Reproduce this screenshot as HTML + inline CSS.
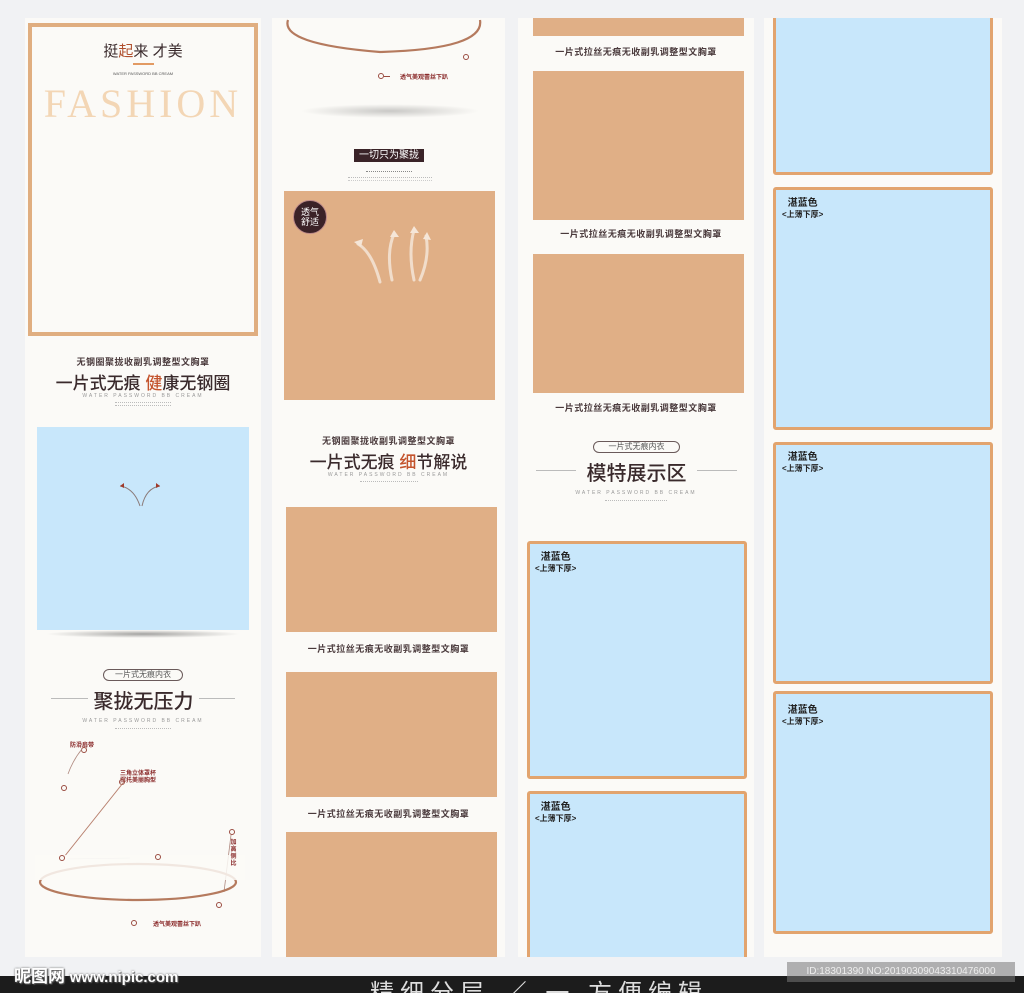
<!DOCTYPE html>
<html><head><meta charset="utf-8"><style>
*{margin:0;padding:0;box-sizing:border-box}
body{width:1024px;height:993px;overflow:hidden;background:#f1f2f4;position:relative;font-family:"Liberation Sans","Noto Sans CJK SC",sans-serif}
.a{position:absolute}
.col{position:absolute;top:18px;height:939px;background:#fbfaf7}
.clip{position:absolute;top:18px;height:939px;overflow:hidden}
.tan{position:absolute;background:#e0af86}
.blue{position:absolute;background:#c8e7fb;border:3px solid #e2a46e;border-radius:3px}
.t{position:absolute;white-space:nowrap;text-align:center;color:#3a2a2c}
.cap{font-size:9px;font-weight:bold;color:#4a3a3c;letter-spacing:.5px}
.wc{font-size:5px;color:#999;letter-spacing:2px}
.lbl{position:absolute;font-size:10px;font-weight:bold;color:#222;line-height:11px;text-align:center}
.lbl small{display:block;font-size:8px}
.dot{position:absolute;width:6px;height:6px;border:1.5px solid #9a4b40;border-radius:50%}
</style></head><body>

<!-- column 1 -->
<div class="col" style="left:25px;width:236px"></div>
<div class="a" style="left:28px;top:23px;width:230px;height:313px;border:4px solid #e0ae80"></div>
<div class="t" style="left:28px;width:230px;top:40px;font-size:15px;color:#3a2a2c">挺<span style="color:#b0502e">起</span>来 才美</div>
<div class="a" style="left:133px;top:63px;width:21px;height:2px;background:#e29a63"></div>
<div class="t" style="left:28px;width:230px;top:71px;font-size:4px;color:#555">WATER PASSWORD BB CREAM</div>
<div class="t" style="left:30px;width:226px;top:84px;font-family:'Liberation Serif',serif;font-size:40px;color:#f3d6b5;letter-spacing:4px;line-height:40px">FASHION</div>
<div class="t cap" style="left:25px;width:236px;top:355px">无钢圈聚拢收副乳调整型文胸罩</div>
<div class="t" style="left:25px;width:236px;top:369px;font-size:17px;font-weight:500">一片式无痕 <span style="color:#c4542d">健</span>康无钢圈</div>
<div class="t wc" style="left:25px;width:236px;top:393px">WATER PASSWORD BB CREAM</div>
<div class="a" style="left:115px;top:402px;width:56px;height:4px;border-top:1px dotted #bbb;border-bottom:1px dotted #bbb"></div>
<div class="a" style="left:37px;top:427px;width:212px;height:203px;background:#c8e7fb"></div>
<svg class="a" style="left:110px;top:478px" width="60" height="30"><path d="M30 28 Q24 10 10 8 M32 28 Q36 10 50 8" stroke="#8a7a78" fill="none" stroke-width="1"/><path d="M10 8l4-3v5z M50 8l-4-3v5z" fill="#a03a2a"/></svg>
<div class="a" style="left:45px;top:630px;width:196px;height:8px;background:radial-gradient(ellipse at center,rgba(0,0,0,.35),rgba(0,0,0,0) 70%)"></div>
<div class="a" style="left:103px;top:669px;width:80px;height:12px;border:1.3px solid #6a5a5a;border-radius:7px;font-size:8px;text-align:center;line-height:10px;color:#555">一片式无痕内衣</div>
<div class="a" style="left:51px;top:698px;width:37px;height:1px;background:#bbb"></div>
<div class="a" style="left:199px;top:698px;width:36px;height:1px;background:#bbb"></div>
<div class="t" style="left:88px;width:111px;top:685px;font-size:20px;font-weight:500">聚拢无压力</div>
<div class="t wc" style="left:25px;width:236px;top:718px">WATER PASSWORD BB CREAM</div>
<div class="a" style="left:115px;top:728px;width:56px;height:4px;border-top:1px dotted #bbb"></div>
<div class="t" style="left:70px;top:740px;font-size:6px;color:#8a2a2a;font-weight:bold">防滑肩带</div>
<div class="dot" style="left:81px;top:747px"></div>
<div class="dot" style="left:61px;top:785px"></div>
<div class="t" style="left:120px;top:771px;font-size:6px;color:#8a2a2a;font-weight:bold;text-align:left;line-height:7px">三角立体罩杯<br>撑托美丽胸型</div>
<div class="dot" style="left:119px;top:779px"></div>
<svg class="a" style="left:25px;top:740px" width="236" height="180"><path d="M57 9 Q48 20 43 34" stroke="#b08a80" fill="none" stroke-width=".8"/><path d="M98 43 L39 117" stroke="#b8806e" stroke-width="1"/><path d="M42 119 L105 118" stroke="#ccc" stroke-width=".6"/><path d="M206 95 L199 152" stroke="#b08a80" stroke-width=".8"/><ellipse cx="113" cy="142" rx="98" ry="18" fill="none" stroke="#b57a5e" stroke-width="2.2"/><rect x="10" y="115" width="210" height="25" fill="#fbfaf7" opacity=".85"/></svg>
<div class="dot" style="left:59px;top:855px"></div>
<div class="dot" style="left:155px;top:854px"></div>
<div class="dot" style="left:229px;top:829px"></div>
<div class="dot" style="left:216px;top:902px"></div>
<div class="t" style="left:230px;top:840px;font-size:6px;color:#8a2a2a;font-weight:bold;width:7px;white-space:normal;line-height:7px">加高侧比</div>
<div class="dot" style="left:131px;top:920px"></div>
<div class="t" style="left:153px;top:919px;font-size:6px;color:#8a2a2a;font-weight:bold">透气美观蕾丝下趴</div>

<!-- column 2 -->
<div class="col" style="left:272px;width:233px"></div>
<svg class="a" style="left:280px;top:14px" width="210" height="45"><path d="M8 6 Q0 30 100 38 Q205 35 200 6" stroke="#b57a5e" fill="none" stroke-width="2.2"/></svg>
<div class="dot" style="left:463px;top:54px"></div>
<div class="dot" style="left:378px;top:73px"></div>
<div class="a" style="left:384px;top:76px;width:6px;height:1px;background:#9a4b40"></div>
<div class="t" style="left:400px;top:72px;font-size:6px;color:#8a2a2a;font-weight:bold">透气美观蕾丝下趴</div>
<div class="a" style="left:300px;top:104px;width:180px;height:14px;background:radial-gradient(ellipse at center,rgba(0,0,0,.2),rgba(0,0,0,0) 70%)"></div>
<div class="a" style="left:354px;top:149px;width:70px;height:13px;background:#3a2328;color:#fff;font-size:10px;text-align:center;line-height:13px">一切只为聚拢</div>
<div class="a" style="left:366px;top:171px;width:46px;height:1px;border-top:1px dotted #888"></div>
<div class="a" style="left:348px;top:177px;width:84px;height:4px;border-top:1px dotted #bbb;border-bottom:1px dotted #ccc"></div>
<div class="tan" style="left:284px;top:191px;width:211px;height:209px"></div>
<div class="a" style="left:293px;top:200px;width:34px;height:34px;border-radius:50%;background:#3b2227;color:#fff;font-size:9px;line-height:10px;text-align:center;padding-top:6px;border:1px solid #b88">透气<br>舒适</div>
<svg class="a" style="left:350px;top:222px" width="90" height="65"><g stroke="#f5e6d8" fill="none" stroke-width="3" stroke-linecap="round" opacity=".85"><path d="M30 60 Q22 30 8 22"/><path d="M42 58 Q36 30 44 12"/><path d="M64 58 Q58 30 64 8"/><path d="M70 58 Q80 35 76 14"/></g><g fill="#f5e6d8"><path d="M4 20l9-3-2 8z"/><path d="M44 8l5 7h-9z"/><path d="M64 4l5 7h-9z"/><path d="M77 10l4 8-8-1z"/></g></svg>
<div class="t cap" style="left:272px;width:233px;top:434px">无钢圈聚拢收副乳调整型文胸罩</div>
<div class="t" style="left:272px;width:233px;top:448px;font-size:17px;font-weight:500">一片式无痕 <span style="color:#c4542d">细</span>节解说</div>
<div class="t wc" style="left:272px;width:233px;top:472px">WATER PASSWORD BB CREAM</div>
<div class="a" style="left:360px;top:481px;width:58px;height:4px;border-top:1px dotted #bbb"></div>
<div class="tan" style="left:286px;top:507px;width:211px;height:125px"></div>
<div class="t cap" style="left:272px;width:233px;top:642px">一片式拉丝无痕无收副乳调整型文胸罩</div>
<div class="tan" style="left:286px;top:672px;width:211px;height:125px"></div>
<div class="t cap" style="left:272px;width:233px;top:807px">一片式拉丝无痕无收副乳调整型文胸罩</div>
<div class="tan" style="left:286px;top:832px;width:211px;height:125px"></div>

<!-- column 3 -->
<div class="col" style="left:518px;width:236px"></div>
<div class="tan" style="left:533px;top:18px;width:211px;height:18px"></div>
<div class="t cap" style="left:518px;width:236px;top:45px">一片式拉丝无痕无收副乳调整型文胸罩</div>
<div class="tan" style="left:533px;top:71px;width:211px;height:149px"></div>
<div class="t cap" style="left:523px;width:236px;top:227px">一片式拉丝无痕无收副乳调整型文胸罩</div>
<div class="tan" style="left:533px;top:254px;width:211px;height:139px"></div>
<div class="t cap" style="left:518px;width:236px;top:401px">一片式拉丝无痕无收副乳调整型文胸罩</div>
<div class="a" style="left:593px;top:441px;width:87px;height:12px;border:1.3px solid #6a5a5a;border-radius:7px;font-size:8px;text-align:center;line-height:10px;color:#555">一片式无痕内衣</div>
<div class="a" style="left:536px;top:470px;width:40px;height:1px;background:#bbb"></div>
<div class="a" style="left:697px;top:470px;width:40px;height:1px;background:#bbb"></div>
<div class="t" style="left:576px;width:121px;top:457px;font-size:20px;font-weight:500">模特展示区</div>
<div class="t wc" style="left:518px;width:236px;top:490px">WATER PASSWORD BB CREAM</div>
<div class="a" style="left:605px;top:500px;width:62px;height:4px;border-top:1px dotted #bbb"></div>
<div class="clip" style="left:518px;width:236px">
<div class="blue" style="left:9px;top:523px;width:220px;height:238px"></div>
<div class="lbl" style="left:17px;top:534px">湛蓝色<small>&lt;上薄下厚&gt;</small></div>
<div class="blue" style="left:9px;top:773px;width:220px;height:200px"></div>
<div class="lbl" style="left:17px;top:784px">湛蓝色<small>&lt;上薄下厚&gt;</small></div>
</div>

<!-- column 4 -->
<div class="col" style="left:764px;width:238px"></div>
<div class="clip" style="left:764px;width:238px">
<div class="blue" style="left:9px;top:-10px;width:220px;height:167px"></div>
<div class="blue" style="left:9px;top:169px;width:220px;height:243px"></div>
<div class="lbl" style="left:18px;top:180px">湛蓝色<small>&lt;上薄下厚&gt;</small></div>
<div class="blue" style="left:9px;top:424px;width:220px;height:242px"></div>
<div class="lbl" style="left:18px;top:434px">湛蓝色<small>&lt;上薄下厚&gt;</small></div>
<div class="blue" style="left:9px;top:673px;width:220px;height:243px"></div>
<div class="lbl" style="left:18px;top:687px">湛蓝色<small>&lt;上薄下厚&gt;</small></div>
</div>

<!-- bottom -->
<div class="a" style="left:0;top:976px;width:1024px;height:17px;background:#1c1c1c;overflow:hidden">
<div class="a" style="left:370px;top:3px;font-size:24px;line-height:30px;color:#ddd;white-space:nowrap;letter-spacing:6px">精细分层 ／ 一 方便编辑</div></div>
<div class="a" style="left:787px;top:962px;width:228px;height:20px;background:rgba(120,120,120,.55);color:#eee;font-size:10px;line-height:20px;text-align:center">ID:18301390 NO:20190309043310476000</div>
<div class="a" style="left:14px;top:962px;font-size:17px;font-weight:bold;color:#fff;text-shadow:0 0 2px #666,1px 1px 1px #555;white-space:nowrap">昵图网 <span style="font-size:15px">www.nipic.com</span></div>
</body></html>
